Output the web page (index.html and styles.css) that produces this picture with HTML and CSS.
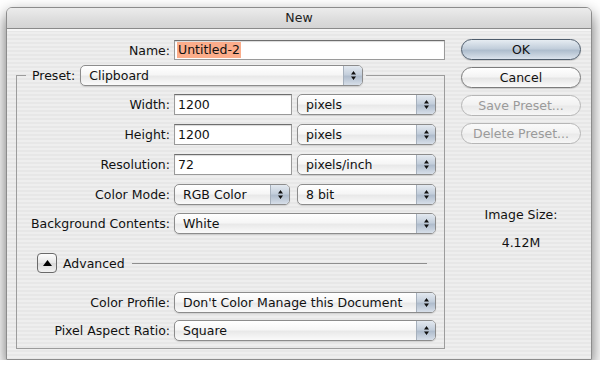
FILE: index.html
```html
<!DOCTYPE html>
<html lang="en">
<head>
    <meta charset="UTF-8">
    <title>New</title>
    <link rel="stylesheet" href="styles.css">
</head>
<body>
  <div class="window">
    <div class="titlebar">New</div>
    <div class="panel">
      <div class="main">
        <div class="name-row">
          <span class="lbl">Name:</span>
          <div class="field name"><span class="hilite">Untitled-2</span></div>
        </div>
        <fieldset class="group">
          <legend class="preset">
            <span>Preset:</span>
            <div class="popup w283"><span class="val">Clipboard</span><span class="arr"><svg width="7" height="11" viewBox="0 0 7 11"><path d="M3.5 1L6 4.5H1z M1 6.5H6L3.5 10z"/></svg></span></div>
          </legend>
          <div class="row">
            <span class="lbl">Width:</span>
            <div class="field num">1200</div>
            <div class="popup w139"><span class="val">pixels</span><span class="arr"><svg width="7" height="11" viewBox="0 0 7 11"><path d="M3.5 1L6 4.5H1z M1 6.5H6L3.5 10z"/></svg></span></div>
          </div>
          <div class="row">
            <span class="lbl">Height:</span>
            <div class="field num">1200</div>
            <div class="popup w139"><span class="val">pixels</span><span class="arr"><svg width="7" height="11" viewBox="0 0 7 11"><path d="M3.5 1L6 4.5H1z M1 6.5H6L3.5 10z"/></svg></span></div>
          </div>
          <div class="row">
            <span class="lbl">Resolution:</span>
            <div class="field num">72</div>
            <div class="popup w139"><span class="val">pixels/inch</span><span class="arr"><svg width="7" height="11" viewBox="0 0 7 11"><path d="M3.5 1L6 4.5H1z M1 6.5H6L3.5 10z"/></svg></span></div>
          </div>
          <div class="row">
            <span class="lbl">Color Mode:</span>
            <div class="popup w116"><span class="val">RGB Color</span><span class="arr"><svg width="7" height="11" viewBox="0 0 7 11"><path d="M3.5 1L6 4.5H1z M1 6.5H6L3.5 10z"/></svg></span></div>
            <div class="popup w139"><span class="val">8 bit</span><span class="arr"><svg width="7" height="11" viewBox="0 0 7 11"><path d="M3.5 1L6 4.5H1z M1 6.5H6L3.5 10z"/></svg></span></div>
          </div>
          <div class="row bg">
            <span class="lbl">Background Contents:</span>
            <div class="popup w262"><span class="val">White</span><span class="arr"><svg width="7" height="11" viewBox="0 0 7 11"><path d="M3.5 1L6 4.5H1z M1 6.5H6L3.5 10z"/></svg></span></div>
          </div>
          <div class="advanced">
            <span class="disclose"><svg width="9" height="6" viewBox="0 0 9 6"><path d="M4.5 0L9 6H0z"/></svg></span>
            <span>Advanced</span>
            <span class="rule"></span>
          </div>
          <div class="row profile">
            <span class="lbl">Color Profile:</span>
            <div class="popup w262"><span class="val">Don't Color Manage this Document</span><span class="arr"><svg width="7" height="11" viewBox="0 0 7 11"><path d="M3.5 1L6 4.5H1z M1 6.5H6L3.5 10z"/></svg></span></div>
          </div>
          <div class="row aspect">
            <span class="lbl">Pixel Aspect Ratio:</span>
            <div class="popup w262"><span class="val">Square</span><span class="arr"><svg width="7" height="11" viewBox="0 0 7 11"><path d="M3.5 1L6 4.5H1z M1 6.5H6L3.5 10z"/></svg></span></div>
          </div>
        </fieldset>
      </div>
      <div class="side">
        <div class="btn default">OK</div>
        <div class="btn">Cancel</div>
        <div class="btn disabled">Save Preset...</div>
        <div class="btn disabled">Delete Preset...</div>
        <div class="imgsize">
          <div>Image Size:</div>
          <div>4.12M</div>
        </div>
      </div>
    </div>
  </div>
</body>
</html>
```

FILE: styles.css
```css
* {
  margin: 0;
  padding: 0;
  box-sizing: border-box;
}
body {
  background: #fff;
  font-family: "DejaVu Sans", sans-serif;
  font-size: 12.5px;
  color: #111;
}
.window {
  width: 586px;
  height: 353px;
  margin: 7px 0 0 6px;
  border: 1px solid #8c8c8c;
  border-radius: 6px 6px 0 0;
  background: repeating-linear-gradient(to bottom, #eeeeee 0, #eeeeee 2px, #e7e7e7 2px, #e7e7e7 4px);
  box-shadow: 0 7px 16px rgba(0, 0, 0, 0.6);
}
.titlebar {
  height: 21px;
  line-height: 20px;
  text-align: center;
  color: #222;
  border-bottom: 1px solid #8a8a8a;
  border-radius: 5px 5px 0 0;
  background: linear-gradient(#ececec, #dcdcdc 60%, #d4d4d4);
}
.panel {
  display: flex;
  border-top: 2px solid #f6f6f6;
}
.main {
  width: 429px;
  margin-left: 9px;
  padding-top: 9px;
}
.lbl {
  width: 153px;
  margin-right: 4px;
  text-align: right;
  white-space: nowrap;
}
.name-row {
  display: flex;
  align-items: center;
  height: 20px;
}
.name-row .lbl {
  width: 154px;
}
.field {
  height: 21px;
  background: #fff;
  border: 1px solid #9a9a9a;
  border-top-color: #6e6e6e;
  box-shadow: inset 0 1px 1px rgba(0, 0, 0, 0.15);
  padding-left: 3px;
  line-height: 19px;
}
.field.name {
  width: 271px;
  height: 20px;
  padding-left: 2px;
  line-height: 18px;
}
.hilite {
  display: inline-block;
  background: #fbad8b;
  padding: 0 1px;
  line-height: 16px;
}
.field.num {
  width: 118px;
  margin-right: 5px;
}
.group {
  margin-top: 5px;
  border: 1px solid #9c9c9c;
  padding: 8px 0 7px 0;
}
.preset {
  display: flex;
  align-items: center;
  gap: 5px;
  margin-left: 9px;
  padding: 0 3px 0 6px;
}
.popup {
  display: flex;
  height: 21px;
  border: 1px solid #8c8c8c;
  border-radius: 5px;
  overflow: hidden;
  background: linear-gradient(#ffffff, #f6f6f6 45%, #e9e9e9 55%, #fafafa);
  box-shadow: 0 1px 1px rgba(0, 0, 0, 0.12);
}
.popup .val {
  flex: 1;
  padding-left: 8px;
  line-height: 19px;
  white-space: nowrap;
  overflow: hidden;
}
.popup .arr {
  width: 19px;
  display: flex;
  align-items: center;
  justify-content: center;
  border-left: 1px solid #a6b0bc;
  background: linear-gradient(#e3e9f0, #c4cfdc 45%, #b0bdcd 55%, #d7dfe9);
}
.popup svg {
  fill: #111;
}
.w283 {
  width: 283px;
}
.w139 {
  width: 139px;
}
.w116 {
  width: 116px;
  margin-right: 7px;
}
.w262 {
  width: 262px;
}
.row {
  display: flex;
  align-items: center;
  height: 21px;
  margin-top: 9px;
}
.group .row:first-of-type {
  margin-top: 0;
}
.row.bg {
  margin-top: 8px;
}
.advanced {
  display: flex;
  align-items: center;
  height: 20px;
  margin: 19px 17px 0 20px;
}
.disclose {
  width: 20px;
  height: 20px;
  margin-right: 6px;
  display: flex;
  align-items: center;
  justify-content: center;
  border: 1px solid #6a6a6a;
  border-radius: 4px;
  background: linear-gradient(#fdfdfd, #e6e6e6 50%, #d8d8d8 51%, #f2f2f2);
}
.rule {
  flex: 1;
  height: 1px;
  margin-left: 7px;
  background: #8e8e8e;
}
.row.profile {
  margin-top: 19px;
}
.row.aspect {
  margin-top: 7px;
}
.side {
  width: 120px;
  margin-left: 16px;
  padding-top: 8px;
}
.btn {
  height: 21px;
  margin-bottom: 7px;
  line-height: 19px;
  text-align: center;
  border: 1px solid #7c7c7c;
  border-radius: 11px;
  background: linear-gradient(#ffffff, #f4f4f4 45%, #e6e6e6 55%, #fbfbfb);
  box-shadow: 0 1px 1px rgba(0, 0, 0, 0.15);
}
.btn.default {
  border-color: #4f5d6c;
  background: linear-gradient(#e6ecf2, #c2cedb 45%, #aebdcd 55%, #dbe3ec);
}
.btn.disabled {
  color: #9a9a9a;
  border-color: #b6b6b6;
  box-shadow: none;
  background: linear-gradient(#fafafa, #f2f2f2 45%, #eaeaea 55%, #f6f6f6);
}
.imgsize {
  margin-top: 57px;
  text-align: center;
  line-height: 28px;
}
```
